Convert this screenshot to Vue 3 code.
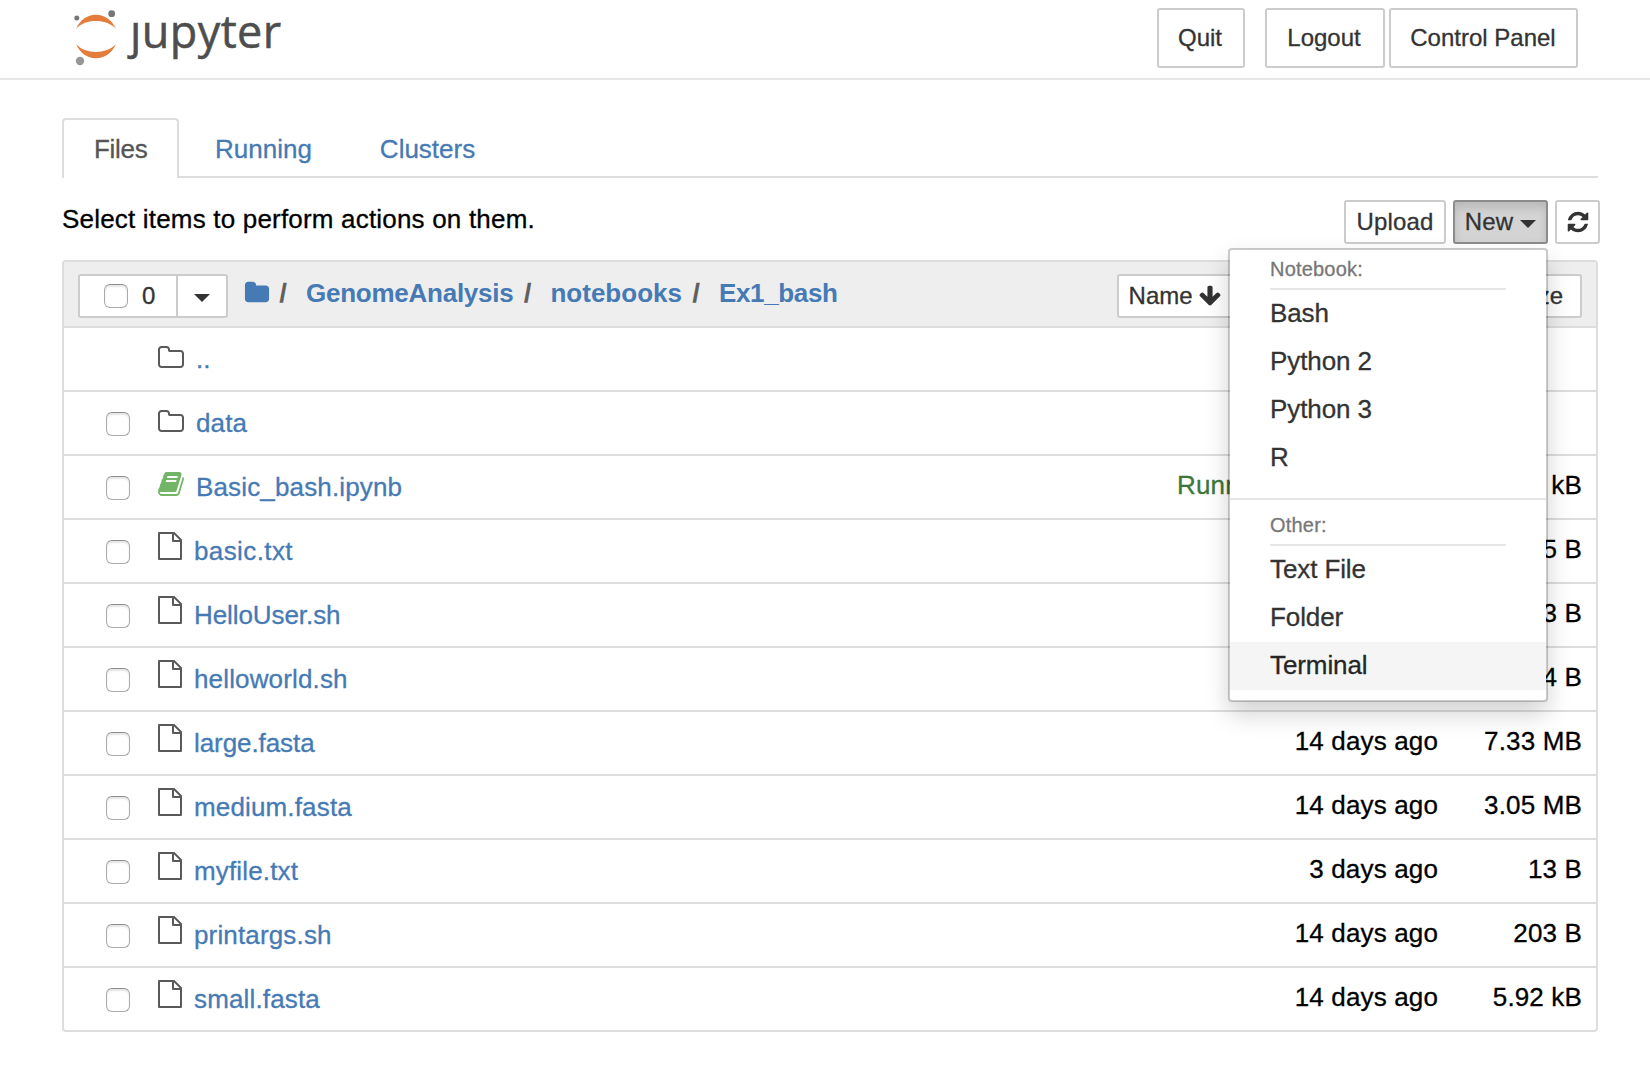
<script setup>
import { ref } from 'vue'

const tabs = ['Files', 'Running', 'Clusters']
const activeTab = ref('Files')
const menuOpen = ref(true)

const crumbs = ['GenomeAnalysis', 'notebooks', 'Ex1_bash']
const kernels = ['Bash', 'Python 2', 'Python 3', 'R']
const others = ['Text File', 'Folder', 'Terminal']

const items = [
  { name: '..', type: 'folder', up: true },
  { name: 'data', type: 'folder' },
  { name: 'Basic_bash.ipynb', type: 'notebook', running: true, size: '3 kB' },
  { name: 'basic.txt', type: 'file', size: '5 B', fit: 'loose' },
  { name: 'HelloUser.sh', type: 'file', size: '3 B', fit: 'tight' },
  { name: 'helloworld.sh', type: 'file', size: '4 B' },
  { name: 'large.fasta', type: 'file', modified: '14 days ago', size: '7.33 MB', fit: 'tight' },
  { name: 'medium.fasta', type: 'file', modified: '14 days ago', size: '3.05 MB' },
  { name: 'myfile.txt', type: 'file', modified: '3 days ago', size: '13 B' },
  { name: 'printargs.sh', type: 'file', modified: '14 days ago', size: '203 B' },
  { name: 'small.fasta', type: 'file', modified: '14 days ago', size: '5.92 kB' },
]
</script>

<template>
  <div class="page">
    <header class="topbar">
      <a class="brand">
        <svg class="planet" width="48" height="60" viewBox="0 0 48 60">
          <path fill="#e47d3c" d="M4 20.700C8 12 15 6.700 23.900 6.700S40 12 44 20.700C38.500 15.500 31.800 13.100 23.900 13.100S9.400 15.500 4 20.700Z" />
          <path fill="#e47d3c" d="M4 36.300C8 45 15 50.300 23.900 50.300S40 45 44 36.300C38.500 41.500 31.800 43.900 23.900 43.900S9.400 41.500 4 36.300Z" />
          <circle cx="4.800" cy="10" r="2.500" fill="#767677" />
          <circle cx="39.700" cy="5.700" r="3.400" fill="#767677" />
          <circle cx="8" cy="53" r="4.200" fill="#989798" />
        </svg>
        <span class="wordmark"><span class="j">j</span>upyter</span>
      </a>
      <div class="session">
        <button class="btn quit">Quit</button>
        <button class="btn logout">Logout</button>
        <button class="btn control">Control Panel</button>
      </div>
    </header>

    <main class="content">
      <nav class="tabs">
        <a v-for="t in tabs" :key="t" class="tab" :class="{ active: t === activeTab }" @click="activeTab = t">{{ t }}</a>
      </nav>

      <div class="toolbar">
        <span class="hint">Select items to perform actions on them.</span>
        <div class="actions">
          <button class="btn-xs upload">Upload</button>
          <div class="new-wrap">
            <button class="btn-xs new" :class="{ pressed: menuOpen }" @click="menuOpen = !menuOpen">New<i class="caret"></i></button>
            <div v-if="menuOpen" class="menu">
              <div class="menu-head">Notebook:</div>
              <div v-for="k in kernels" :key="k" class="menu-item">{{ k }}</div>
              <div class="separator"></div>
              <div class="menu-head">Other:</div>
              <div v-for="o in others" :key="o" class="menu-item" :class="{ hover: o === 'Terminal' }">{{ o }}</div>
            </div>
          </div>
          <button class="btn-xs refresh">
            <svg width="24" height="24" viewBox="0 0 1792 1792"><path fill="#333" d="M1639 1056q0 5-1 7-64 268-268 434.500t-478 166.500q-146 0-282.500-55t-243.500-157l-129 129q-19 19-45 19t-45-19-19-45v-448q0-26 19-45t45-19h448q26 0 45 19t19 45-19 45l-137 137q71 66 161 102t187 36q134 0 250-65t186-179q11-17 53-117 8-23 30-23h192q13 0 22.500 9.500t9.500 22.500zm25-800v448q0 26-19 45t-45 19h-448q-26 0-45-19t-19-45 19-45l138-138q-148-137-349-137-134 0-250 65t-186 179q-11 17-53 117-8 23-30 23h-199q-13 0-22.500-9.500t-9.500-22.500v-7q65-268 270-434.500t480-166.500q146 0 284 55.500t245 156.500l130-129q19-19 45-19t45 19 19 45z" /></svg>
          </button>
        </div>
      </div>

      <section class="list">
        <div class="list-head">
          <div class="select-group">
            <label class="select-all"><input type="checkbox" class="check" /><span>0</span></label>
            <button class="select-menu"><i class="caret"></i></button>
          </div>
          <div class="crumbs">
            <svg class="home" width="26" height="26" viewBox="0 0 1792 1792"><path fill="#467ab5" d="M1728 608v704q0 92-66 158t-158 66h-1216q-92 0-158-66t-66-158v-960q0-92 66-158t158-66h320q92 0 158 66t66 158v32h672q92 0 158 66t66 158z" /></svg>
            <template v-for="c in crumbs" :key="c"><span class="slash">/</span><a class="crumb" :class="'c-' + c">{{ c }}</a></template>
          </div>
          <div class="sorts">
            <button class="btn-xs sort-name">Name<svg width="24" height="24" viewBox="0 0 1792 1792"><path fill="#333" d="M1675 832q0 53-37 90l-651 652q-39 37-91 37-53 0-90-37l-651-652q-38-36-38-90 0-53 38-91l74-75q39-37 91-37 53 0 90 37l294 294v-704q0-52 38-90t90-38h128q52 0 90 38t38 90v704l294-294q37-37 90-37 52 0 91 37l75 75q37 39 37 91z" /></svg></button>
            <button class="btn-xs sort-size">File size</button>
          </div>
        </div>

        <div v-for="item in items" :key="item.name" class="row">
          <div class="check-cell"><input v-if="!item.up" type="checkbox" class="check" /></div>
          <svg v-if="item.type === 'folder'" class="icon folder" width="28" height="28" viewBox="0 0 1792 1792"><path fill="#5a5a5a" d="M1600 1312v-704q0-40-28-68t-68-28h-704q-40 0-68-28t-28-68v-64q0-40-28-68t-68-28h-320q-40 0-68 28t-28 68v960q0 40 28 68t68 28h1216q40 0 68-28t28-68zm128-704v704q0 92-66 158t-158 66h-1216q-92 0-158-66t-66-158v-960q0-92 66-158t158-66h320q92 0 158 66t66 158v32h672q92 0 158 66t66 158z" /></svg>
          <svg v-else-if="item.type === 'notebook'" class="icon book" width="28" height="28" viewBox="0 0 1792 1792"><path fill="#73b566" d="M1703 478q40 57 18 129l-275 906q-19 64-76.500 107.500t-122.500 43.500h-923q-77 0-148.500-53.500t-99.500-131.500q-24-67-2-127 0-4 3-27t4-37q1-8-3-21.500t-3-19.500q2-11 8-21t16.500-23.500 16.500-23.500q23-38 45-91.500t30-91.500q3-10 .5-30t-.5-28q3-11 17-28t17-23q21-36 42-92t25-90q1-9-2.500-32t.5-28q4-13 22-30.500t22-22.500q19-26 42.500-84.500t27.500-96.500q1-8-3-25.500t-2-26.500q2-8 9-18t18-23 17-21q8-12 16.500-30.500t15-35 16-36 19.500-32 26.500-23.500 36-11.500 47.500 5.500l-1 3q38-9 51-9h761q74 0 114 56t18 130l-274 906q-36 119-71.500 153.500t-128.500 34.500h-869q-27 0-38 15-11 16-1 43 24 70 144 70h923q29 0 56-15.500t35-41.500l300-987q7-22 5-57 38 15 59 43zm-1064 2q-4 13 2 22.500t20 9.500h608q13 0 25.500-9.500t16.500-22.500l21-64q4-13-2-22.500t-20-9.500h-608q-13 0-25.500 9.500t-16.500 22.500zm-83 256q-4 13 2 22.500t20 9.500h608q13 0 25.500-9.500t16.500-22.500l21-64q4-13-2-22.500t-20-9.500h-608q-13 0-25.500 9.500t-16.500 22.500z" /></svg>
          <svg v-else class="icon file" width="26" height="28" viewBox="0 0 26 28"><path fill="none" stroke="#5a5a5a" stroke-width="2" stroke-linejoin="round" d="M2 1H17L24 8V27H2ZM16 1V9H24" /></svg>
          <a class="name" :class="item.fit">{{ item.name }}</a>
          <span v-if="item.running" class="running">Running</span>
          <span class="modified">{{ item.modified }}</span>
          <span class="size">{{ item.size }}</span>
        </div>
      </section>
    </main>
  </div>
</template>

<style>
html, body { margin: 0; background: #fff; }
</style>

<style scoped>
* { box-sizing: border-box; }
.page {
  width: 1650px;
  height: 1070px;
  overflow: hidden;
  background: #fff;
  color: #000;
  font-family: "Liberation Sans", Arial, sans-serif;
  font-size: 26px;
  letter-spacing: 0.15px;
  -webkit-text-stroke: 0.3px currentColor;
}
button {
  font-family: inherit;
  letter-spacing: inherit;
  color: #333;
  background: #fff;
  border: 2px solid #ccc;
  border-radius: 3px;
  padding: 0;
  margin: 0;
  white-space: nowrap;
}
.topbar {
  height: 80px;
  border-bottom: 2px solid #e7e7e7;
  display: flex;
  justify-content: space-between;
  align-items: flex-start;
  padding: 8px 72px 0;
}
.brand { display: flex; align-items: flex-start; }
.planet { display: block; }
.wordmark {
  margin-left: 10px;
  font-family: "Open Sans", "Noto Sans", sans-serif;
  font-size: 45px;
  line-height: 64px;
  height: 64px;
  margin-top: -9px;
  letter-spacing: 0.4px;
  color: #4e4e4e;
  -webkit-text-stroke: 0.5px #4e4e4e;
}
.j { display: inline-block; clip-path: inset(22px -10px -10px -10px); }
.session { display: flex; }
.btn { height: 60px; font-size: 24px; letter-spacing: 0; }
.quit { width: 88px; margin-right: 20px; padding-right: 2px; }
.logout { width: 120px; margin-right: 4px; padding-right: 2px; }
.control { width: 189px; padding-right: 1px; }

.content { padding: 38px 50px 0 62px; }
.tabs { display: flex; width: 1536px; height: 60px; border-bottom: 2px solid #ddd; }
.tab {
  height: 60px;
  line-height: 58px;
  color: #467ab5;
  border: 2px solid transparent;
  border-bottom: 0;
  padding: 0 30px;
  margin-right: 4px;
  letter-spacing: 0;
}
.tab.active {
  width: 117px;
  color: #555;
  background: #fff;
  border-color: #ddd;
  border-radius: 4px 4px 0 0;
  letter-spacing: -0.3px;
}
.toolbar { display: flex; justify-content: space-between; height: 82px; padding-top: 22px; }
.hint { line-height: 38px; letter-spacing: 0.19px; }
.actions { display: flex; height: 44px; }
.btn-xs { height: 44px; font-size: 24px; }
.upload { width: 102px; }
.new-wrap { position: relative; margin: 0 7px; }
.new { width: 95px; display: flex; align-items: center; justify-content: center; gap: 7px; }
.new .caret { margin-top: 3px; }
.pressed { background: #d4d4d4; border-color: #8c8c8c; box-shadow: inset 0 6px 10px rgba(0, 0, 0, 0.125); }
.refresh { width: 45px; display: flex; align-items: center; justify-content: center; }
.caret {
  display: block;
  width: 0;
  height: 0;
  border: 8px solid transparent;
  border-top-color: #333;
  border-bottom: 0;
}
.toolbar { width: 1538px; }
.menu {
  position: absolute;
  z-index: 5;
  top: 48px;
  right: 0;
  width: 320px;
  height: 454px;
  background: #fff;
  background-clip: padding-box;
  border: 2px solid rgba(0, 0, 0, 0.2);
  border-radius: 4px;
  box-shadow: 0 12px 24px rgba(0, 0, 0, 0.175);
}
.menu-head {
  margin: 0 40px;
  height: 40px;
  line-height: 38px;
  border-bottom: 2px solid #e5e5e5;
  font-size: 20px;
  letter-spacing: 0.2px;
  color: #777;
}
.menu-item { height: 48px; line-height: 46px; padding-left: 40px; color: #333; letter-spacing: -0.1px; }
.menu-item.hover { background: #f5f5f5; color: #262626; }
.separator { margin: 16px 0 6px; height: 2px; background: #e5e5e5; }

.list { width: 1536px; border: 2px solid #ddd; border-radius: 4px; }
.list-head {
  display: flex;
  height: 66px;
  background: #eee;
  border-bottom: 2px solid #ddd;
  padding: 12px 14px 0;
}
.select-group {
  display: flex;
  width: 150px;
  height: 44px;
  border: 2px solid #ccc;
  border-radius: 3px;
  background: #fff;
}
.select-all { display: flex; align-items: center; width: 98px; padding-left: 24px; border-right: 2px solid #ccc; font-size: 24px; color: #333; }
.select-all span { margin-left: 14px; }
.select-menu { flex: 1; border: 0; background: none; display: flex; justify-content: center; align-items: center; padding-top: 3px; }
.check {
  appearance: none;
  display: block;
  width: 24px;
  height: 24px;
  margin: 0;
  border: 1.5px solid #aaa;
  border-top-color: #8e8e8e;
  border-radius: 6px;
  background: #fff;
  box-shadow: inset 0 2px 2px rgba(0, 0, 0, 0.1);
}
.crumbs { display: flex; font-weight: bold; height: 38px; line-height: 38px; margin-left: 16px; letter-spacing: -0.25px; }
.home { display: block; margin-top: 6px; }
.slash { width: 10px; margin-left: 8px; color: #5e5e5e; text-align: center; }
.slash ~ .slash { margin-left: 9px; }
.crumb { margin-left: 18px; color: #467ab5; -webkit-text-stroke: 0; }
.c-notebooks { letter-spacing: 0; }
.c-Ex1_bash { letter-spacing: -0.35px; }
.sorts { display: flex; flex: 1; justify-content: space-between; margin-left: 279px; }
.sort-name { display: flex; align-items: center; width: 118px; padding-left: 10px; gap: 5px; letter-spacing: 0; }
.sort-size { width: 126px; letter-spacing: 0; }

.row { display: flex; height: 64px; border-bottom: 2px solid #ddd; padding-right: 14px; }
.row:last-child { height: 62px; border-bottom: 0; }
.check-cell { width: 93px; padding: 20px 0 0 42px; flex: none; }
.icon { display: block; flex: none; }
.folder { margin-top: 16px; }
.book { margin-top: 14px; }
.file { margin-top: 12px; }
.name { margin-left: 11px; line-height: 62px; color: #467ab5; }
.name.loose { letter-spacing: 0.4px; }
.name.tight { letter-spacing: -0.08px; }
.running { margin-left: auto; width: 98px; margin-right: -53px; line-height: 58px; color: #3c763d; }
.modified { width: 214px; line-height: 58px; text-align: right; }
.name + .modified { margin-left: auto; }
.size { width: 144px; line-height: 58px; text-align: right; white-space: nowrap; }
.running { position: relative; left: -2px; }
</style>
